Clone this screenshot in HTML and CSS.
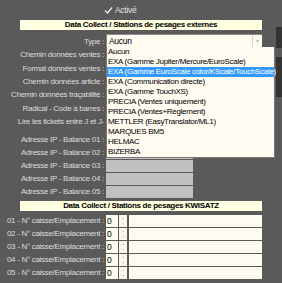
FILE: index.html
```html
<!DOCTYPE html>
<html lang="fr">
<head>
<meta charset="utf-8">
<link rel="stylesheet" href="styles.css">
</head>
<body>
<div class="page">
  <div class="edge">
    <div class="edge-a"></div>
    <div class="edge-b"></div>
  </div>
  <div class="activ">
    <svg class="chk" width="9" height="9" viewBox="0 0 9 9"><path d="M1 4.5 L3.5 7 L8 1.5" fill="none" stroke="#e8e8e8" stroke-width="1.4"/></svg>
    <span>Activé</span>
  </div>

  <section class="group ext">
    <div class="hdr">Data Collect / Stations de pesages externes</div>
    <div class="row type"><span class="lbl"><span>Type :</span></span><div class="select"><span class="val">Aucun</span><span class="btn">▾</span></div></div>
    <div class="rows up">
      <div class="row"><span class="lbl"><span>Chemin données ventes :</span></span><span class="fld cream"></span></div>
      <div class="row"><span class="lbl"><span>Format données ventes :</span></span><span class="fld cream"></span></div>
      <div class="row"><span class="lbl"><span>Chemin données article :</span></span><span class="fld cream"></span></div>
      <div class="row"><span class="lbl"><span>Chemin données traçabilité :</span></span><span class="fld cream"></span></div>
      <div class="row"><span class="lbl"><span>Radical - Code à barres :</span></span><span class="fld cream"></span></div>
      <div class="row"><span class="lbl"><span>Lire les tickets entre J et J-</span></span><span class="fld cream"></span></div>
    </div>
    <div class="rows ip">
      <div class="row"><span class="lbl"><span>Adresse IP - Balance 01 :</span></span><span class="fld gray"></span></div>
      <div class="row"><span class="lbl"><span>Adresse IP - Balance 02 :</span></span><span class="fld gray"></span></div>
      <div class="row"><span class="lbl"><span>Adresse IP - Balance 03 :</span></span><span class="fld gray"></span></div>
      <div class="row"><span class="lbl"><span>Adresse IP - Balance 04 :</span></span><span class="fld gray"></span></div>
      <div class="row"><span class="lbl"><span>Adresse IP - Balance 05 :</span></span><span class="fld gray"></span></div>
    </div>
    <ul class="dropdown">
      <li>Aucun</li>
      <li>EXA (Gamme Jupiter/Mercure/EuroScale)</li>
      <li class="sel">EXA (Gamme EuroScale color/KScale/TouchScale)</li>
      <li>EXA (Communication directe)</li>
      <li>EXA (Gamme TouchXS)</li>
      <li>PRECIA (Ventes uniquement)</li>
      <li>PRECIA (Ventes+Règlement)</li>
      <li>METTLER (EasyTranslator/ML1)</li>
      <li>MARQUES BM5</li>
      <li>HELMAC</li>
      <li>BIZERBA</li>
    </ul>
  </section>

  <section class="group kw">
    <div class="hdr">Data Collect / Stations de pesages KWISATZ</div>
    <div class="rows k">
      <div class="row"><span class="lbl"><span>01 - N° caisse/Emplacement :</span></span><span class="num">0</span><span class="spin">▴<br>▾</span><span class="fld cream wide"></span></div>
      <div class="row"><span class="lbl"><span>02 - N° caisse/Emplacement :</span></span><span class="num">0</span><span class="spin">▴<br>▾</span><span class="fld cream wide"></span></div>
      <div class="row"><span class="lbl"><span>03 - N° caisse/Emplacement :</span></span><span class="num">0</span><span class="spin">▴<br>▾</span><span class="fld cream wide"></span></div>
      <div class="row"><span class="lbl"><span>04 - N° caisse/Emplacement :</span></span><span class="num">0</span><span class="spin">▴<br>▾</span><span class="fld cream wide"></span></div>
      <div class="row"><span class="lbl"><span>05 - N° caisse/Emplacement :</span></span><span class="num">0</span><span class="spin">▴<br>▾</span><span class="fld cream wide"></span></div>
    </div>
  </section>
</div>
</body>
</html>
```
FILE: styles.css
```css
html, body {
  margin: 0;
  padding: 0;
  background: #5a5a5a;
}
body {
  font-family: "Liberation Sans", Arial, sans-serif;
  font-size: 8px;
  letter-spacing: -0.3px;
  color: #dcdcdc;
  width: 282px;
  height: 283px;
  overflow: hidden;
}
.page {
  position: relative;
  width: 282px;
  height: 283px;
}
.edge {
  position: absolute;
  left: 276px;
  top: 27px;
  width: 6px;
}
.edge-a { height: 21px; background: #333; }
.edge-b { height: 40px; margin-top: 9px; background: #333; }

.activ {
  height: 20px;
  display: flex;
  align-items: center;
  padding-left: 104px;
  gap: 2px;
  color: #e2e2e2;
  font-size: 8.5px;
}
.chk { display: block; }

.group { position: relative; }
.hdr {
  margin-left: 20px;
  width: 242px;
  height: 10px;
  line-height: 10px;
  background: #ffffe1;
  color: #000;
  font-weight: bold;
  text-align: center;
  font-size: 8px;
}
.row {
  display: flex;
  align-items: center;
}
.lbl {
  width: 104px;
  margin-right: 2px;
  display: flex;
  justify-content: flex-end;
  white-space: nowrap;
  flex: none;
}
.type { margin-top: 4px; height: 14px; }
.select {
  width: 156px;
  height: 14px;
  box-sizing: border-box;
  background: #fffbf0;
  color: #000;
  display: flex;
  align-items: center;
  border: 1px solid #8a8a8a;
  border-right: none;
}
.select .val { flex: 1; padding-left: 2px; font-size: 8.5px; }
.select .btn {
  width: 9px;
  height: 12px;
  border-left: 1px solid #d8d4c8;
  color: #bbb;
  font-size: 6px;
  text-align: center;
  line-height: 12px;
}
.rows.up .row { height: 13.4px; }
.rows.up .fld { height: 12px; }
.rows.ip { margin-top: 5.3px; display: flex; flex-direction: column; gap: 1px; }
.rows.ip .row { height: 12px; }
.fld { display: block; height: 12px; width: 87px; }
.cream { background: #fffbf0; }
.gray { background: #c0c0c0; }

.kw { margin-top: 3px; }
.rows.k { margin-top: 4px; display: flex; flex-direction: column; gap: 1px; }
.rows.k .row { height: 12px; }
.num {
  width: 12px;
  height: 12px;
  background: #fffbf0;
  color: #000;
  line-height: 12px;
  padding-left: 1px;
  box-sizing: border-box;
  font-size: 8.5px;
}
.spin {
  width: 8px;
  height: 12px;
  margin-left: 1px;
  background: #fbf7ea;
  color: #d0d0d0;
  font-size: 4px;
  line-height: 6px;
  text-align: center;
}
.fld.wide { width: 133px; margin-left: 2px; }

.dropdown {
  position: absolute;
  left: 106px;
  top: 27px;
  width: 169px;
  margin: 0;
  padding: 0;
  list-style: none;
  background: #fffbf0;
  border: 1px solid #777;
  border-top: none;
  box-sizing: border-box;
  color: #000;
}
.dropdown li {
  height: 10px;
  line-height: 10px;
  padding-left: 1px;
  white-space: nowrap;
  font-size: 8px;
}
.dropdown li.sel { background: #3399ff; color: #fff; }
```
